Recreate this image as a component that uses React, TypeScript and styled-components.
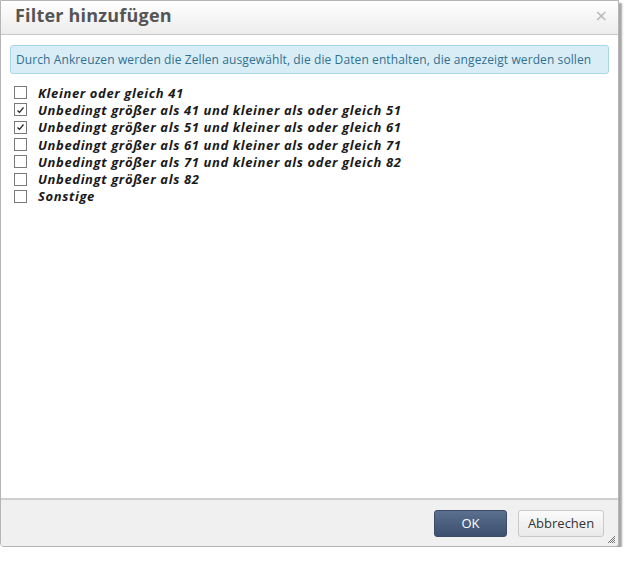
import React, { useState } from 'react';
import styled, { createGlobalStyle } from 'styled-components';

const GlobalStyle = createGlobalStyle`
  html, body {
    margin: 0;
    padding: 0;
    background: #ffffff;
  }
  * {
    box-sizing: border-box;
  }
`;

const Dialog = styled.div`
  width: 619px;
  height: 547px;
  border: 1px solid #b5b5b5;
  border-radius: 0 0 4px 4px;
  box-shadow: 3px 3px 2px rgba(0, 0, 0, 0.35);
  display: flex;
  flex-direction: column;
  background: #fff;
  font-family: 'Open Sans', 'Noto Sans', sans-serif;
  overflow: hidden;
`;

const Header = styled.div`
  height: 34px;
  flex: none;
  display: flex;
  align-items: center;
  padding: 0 14px 5px 14px;
  background: linear-gradient(#ffffff, #ececec);
  border-bottom: 1px solid #c8c8c8;
`;

const Title = styled.div`
  font-size: 18px;
  font-weight: bold;
  color: #555;
  letter-spacing: 0.2px;
`;

const Close = styled.div`
  margin-left: auto;
  margin-right: -4px;
  font-size: 16px;
  color: #b8b8b8;
  font-family: 'DejaVu Sans', sans-serif;
  line-height: 1;
  margin-top: 2px;
`;

const Body = styled.div`
  flex: 1;
  padding: 10px 9px 0 9px;
`;

const Info = styled.div`
  border: 1px solid #a9d7ea;
  background: #d9edf7;
  color: #31708f;
  border-radius: 3px;
  font-size: 12px;
  height: 29px;
  display: flex;
  align-items: center;
  padding: 0 5px;
  white-space: nowrap;
  letter-spacing: 0.1px;
`;

const List = styled.div`
  margin-top: 10px;
  display: flex;
  flex-direction: column;
  padding-left: 4px;
`;

const Row = styled.label`
  height: 17.3px;
  display: flex;
  align-items: center;
  gap: 11px;
`;

const Box = styled.span<{ checked: boolean }>`
  width: 13px;
  height: 13px;
  border: 1px solid #7a7a7a;
  background: #fff;
  display: flex;
  align-items: center;
  justify-content: center;
  flex: none;
`;

const Label = styled.span`
  font-family: 'Open Sans', sans-serif;
  font-weight: bold;
  font-style: italic;
  font-size: 13px;
  color: #1a1a1a;
  letter-spacing: 0.62px;
  white-space: nowrap;
`;

const Footer = styled.div`
  height: 48px;
  flex: none;
  border-top: 2px solid #cfcfcf;
  background: #f0f0f0;
  display: flex;
  align-items: center;
  justify-content: flex-end;
  gap: 11px;
  padding: 0 14px 0 0;
  position: relative;
`;

const Button = styled.button<{ primary?: boolean }>`
  height: 27px;
  border-radius: 3px;
  font-family: 'Open Sans', sans-serif;
  font-size: 13px;
  cursor: pointer;
  padding: 0;
  border: 1px solid ${(p) => (p.primary ? '#3a4c68' : '#c9c9c9')};
  color: ${(p) => (p.primary ? '#fff' : '#333')};
  background: ${(p) =>
    p.primary ? 'linear-gradient(#5b6f90, #3c4f6e)' : 'linear-gradient(#fbfbfb, #e9e9e9)'};
  width: ${(p) => (p.primary ? '73px' : '86px')};
`;

const Grip = styled.svg`
  position: absolute;
  right: 2px;
  bottom: 2px;
`;

const options = [
  'Kleiner oder gleich 41',
  'Unbedingt größer als 41 und kleiner als oder gleich 51',
  'Unbedingt größer als 51 und kleiner als oder gleich 61',
  'Unbedingt größer als 61 und kleiner als oder gleich 71',
  'Unbedingt größer als 71 und kleiner als oder gleich 82',
  'Unbedingt größer als 82',
  'Sonstige',
];

const Check = () => (
  <svg width="9" height="8" viewBox="0 0 9 8">
    <path d="M1.5 4.5 L3.5 6.3 L7.5 1.5" fill="none" stroke="#222" strokeWidth="1.2" />
  </svg>
);

const App = () => {
  const [checked, setChecked] = useState<boolean[]>([false, true, true, false, false, false, false]);

  const toggle = (i: number) => {
    setChecked(checked.map((c, j) => (j === i ? !c : c)));
  };

  return (
    <>
      <GlobalStyle />
      <Dialog>
        <Header>
          <Title>Filter hinzufügen</Title>
          <Close>×</Close>
        </Header>
        <Body>
          <Info>Durch Ankreuzen werden die Zellen ausgewählt, die die Daten enthalten, die angezeigt werden sollen</Info>
          <List>
            {options.map((o, i) => (
              <Row key={o} onClick={() => toggle(i)}>
                <Box checked={checked[i]}>{checked[i] && <Check />}</Box>
                <Label>{o}</Label>
              </Row>
            ))}
          </List>
        </Body>
        <Footer>
          <Button primary>OK</Button>
          <Button>Abbrechen</Button>
          <Grip width="9" height="9" viewBox="0 0 9 9">
            <path d="M8 1 L1 8 M8 3 L3 8 M8 5 L5 8 M8 7 L7 8" stroke="#777" strokeWidth="1" />
          </Grip>
        </Footer>
      </Dialog>
    </>
  );
};

export default App;
